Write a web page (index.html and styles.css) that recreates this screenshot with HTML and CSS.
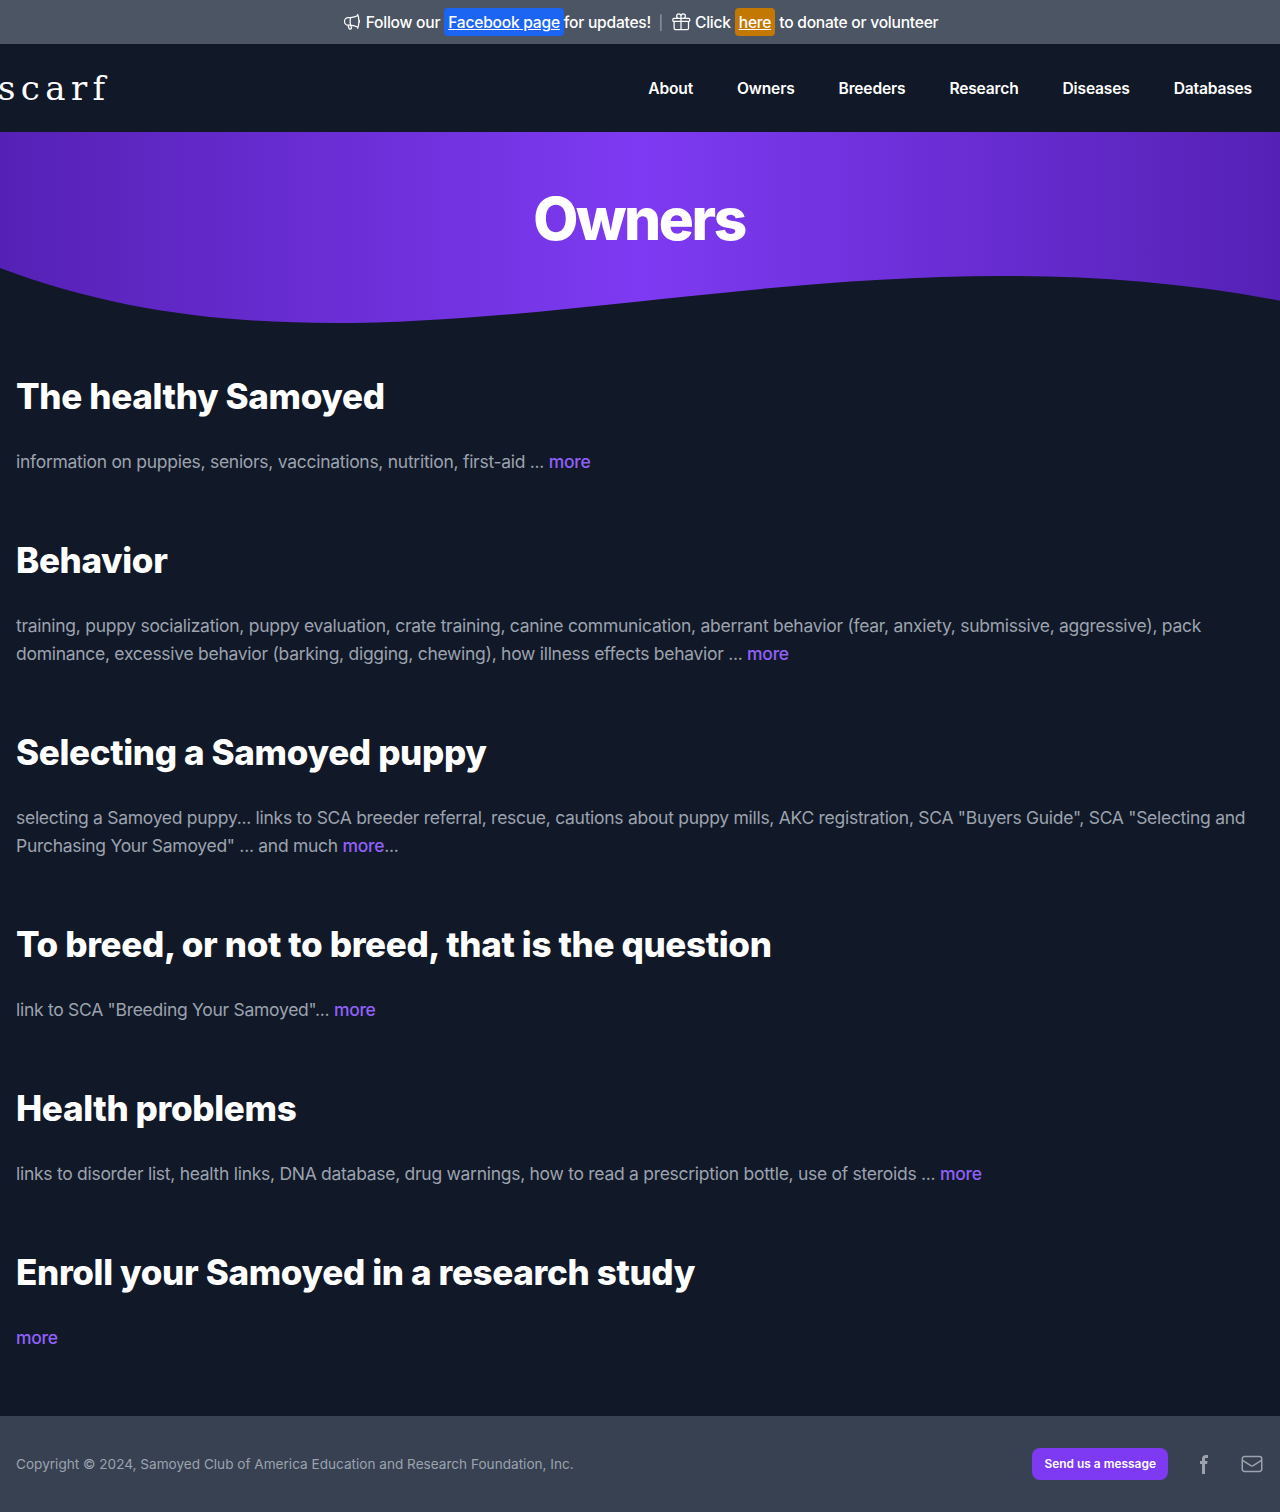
FILE: index.html
```html
<!DOCTYPE html>
<html lang="en">
<head>
<meta charset="utf-8">
<title>Owners - SCARF</title>
<link rel="stylesheet" href="styles.css">
</head>
<body>
<div class="banner">
  <svg class="icon horn" viewBox="0 0 24 24"><path d="M10.34 15.84c-.688-.06-1.386-.09-2.09-.09H7.5a4.5 4.5 0 1 1 0-9h.75c.704 0 1.402-.03 2.09-.09m0 9.18c.253.962.584 1.892.985 2.783.247.55.06 1.21-.463 1.511l-.657.38c-.551.318-1.26.117-1.527-.461a20.845 20.845 0 0 1-1.44-4.282m3.102.069a18.03 18.03 0 0 1-.59-4.59c0-1.586.205-3.124.59-4.59m0 9.18a23.848 23.848 0 0 1 8.835 2.535M10.34 6.66a23.847 23.847 0 0 0 8.835-2.535m0 0A23.74 23.74 0 0 0 18.795 3m.38 1.125a23.91 23.91 0 0 1 1.014 5.395m-1.014 8.855c-.118.38-.245.754-.38 1.125m.38-1.125a23.91 23.91 0 0 0 1.014-5.395m0-3.46c.495.413.811 1.035.811 1.73 0 .695-.316 1.317-.811 1.73m0-3.46a24.347 24.347 0 0 1 0 3.46"/></svg>
  <span class="follow">Follow our</span><a class="pill blue" href="#">Facebook page</a><span>for updates!</span><span class="bar">|</span>
  <svg class="icon gift" viewBox="0 0 24 24"><path d="M21 11.25v8.25a1.5 1.5 0 0 1-1.5 1.5H5.25a1.5 1.5 0 0 1-1.5-1.5v-8.25M12 4.875A2.625 2.625 0 1 0 9.375 7.5H12m0-2.625V7.5m0-2.625A2.625 2.625 0 1 1 14.625 7.5H12m0 0V21m-8.625-9.75h18c.621 0 1.125-.504 1.125-1.125v-1.5c0-.621-.504-1.125-1.125-1.125h-18c-.621 0-1.125.504-1.125 1.125v1.5c0 .621.504 1.125 1.125 1.125Z"/></svg>
  <span class="click">Click</span><a class="pill amber" href="#">here</a><span class="donate">to donate or volunteer</span>
</div>
<header class="header">
  <a class="logo" href="#">scarf</a>
  <nav class="nav"><a href="#">About</a><a href="#">Owners</a><a href="#">Breeders</a><a href="#">Research</a><a href="#">Diseases</a><a href="#">Databases</a></nav>
</header>
<section class="hero">
  <h1>Owners</h1>
  <svg class="wave" viewBox="0 0 1280 80" preserveAspectRatio="none"><path d="M0 16C390 164 794 -44 1280 48.7V80H0Z"/></svg>
</section>
<main class="main">
  <section><h2>The healthy Samoyed</h2><p>information on puppies, seniors, vaccinations, nutrition, first-aid ... <a href="#">more</a></p></section>
  <section><h2>Behavior</h2><p>training, puppy socialization, puppy evaluation, crate training, canine communication, aberrant behavior (fear, anxiety, submissive, aggressive), pack dominance, excessive behavior (barking, digging, chewing), how illness effects behavior ... <a href="#">more</a></p></section>
  <section><h2>Selecting a Samoyed puppy</h2><p>selecting a Samoyed puppy... links to SCA breeder referral, rescue, cautions about puppy mills, AKC registration, SCA "Buyers Guide", SCA "Selecting and Purchasing Your Samoyed" ... and much <a href="#">more</a>...</p></section>
  <section><h2>To breed, or not to breed, that is the question</h2><p>link to SCA "Breeding Your Samoyed"... <a href="#">more</a></p></section>
  <section><h2>Health problems</h2><p>links to disorder list, health links, DNA database, drug warnings, how to read a prescription bottle, use of steroids ... <a href="#">more</a></p></section>
  <section><h2>Enroll your Samoyed in a research study</h2><p><a href="#">more</a></p></section>
</main>
<footer class="footer">
  <p>Copyright © 2024, Samoyed Club of America Education and Research Foundation, Inc.</p>
  <div class="contact">
    <a class="button" href="#">Send us a message</a>
    <svg class="fb" viewBox="0 0 8 19"><path fill-rule="evenodd" d="M6.135 3H8V0H6.135a4.147 4.147 0 0 0-4.142 4.142V6H0v3h2v9.938h3V9h2.021l.592-3H5V3.591A.6.6 0 0 1 5.592 3h.543Z"/></svg>
    <svg class="mail" viewBox="0 0 24 24"><path d="M21.75 6.75v10.5a2.25 2.25 0 0 1-2.25 2.25h-15a2.25 2.25 0 0 1-2.25-2.25V6.75m19.5 0A2.25 2.25 0 0 0 19.5 4.5h-15a2.25 2.25 0 0 0-2.25 2.25m19.5 0v.243a2.25 2.25 0 0 1-1.07 1.916l-7.5 4.615a2.25 2.25 0 0 1-2.36 0L3.32 8.91a2.25 2.25 0 0 1-1.07-1.916V6.75"/></svg>
  </div>
</footer>
</body>
</html>
```
FILE: styles.css
```css
* { box-sizing: border-box; margin: 0; padding: 0; }
body { background: #111827; color: #fff; font-family: Inter, sans-serif; font-size: 15.6px; line-height: 25px; }
a { color: inherit; text-decoration: none; }
svg { display: block; flex: none; fill: none; stroke: currentColor; stroke-width: 1.5; stroke-linecap: round; stroke-linejoin: round; }
.banner { height: 44px; background: #4b5563; display: flex; align-items: center; justify-content: center; font-weight: 500; letter-spacing: -0.24px; white-space: nowrap; }
.icon { width: 20px; height: 20px; }
.follow, .click { margin: 0 4px; }
.pill { height: 28px; padding: 1.5px 4px; border-radius: 4px; text-decoration: underline; }
.blue { background: #1c64f2; }
.amber { background: #c27803; }
.bar { margin: 0 8px 0 7.5px; color: #9ca3af; font-size: 14px; font-weight: 400; }
.donate { margin-left: 4px; }
.header { height: 88px; padding-right: 28px; display: flex; align-items: center; justify-content: space-between; }
.logo { font-family: "DejaVu Serif", serif; font-size: 34px; line-height: 40px; letter-spacing: 5.4px; margin-left: -2px; }
.nav { display: flex; gap: 44px; font-weight: 600; letter-spacing: -0.18px; }
.hero { height: 200px; padding-top: 57px; background: linear-gradient(90deg, #5521b5, #7e3af2 50%, #5521b5); text-align: center; display: flex; flex-direction: column; justify-content: space-between; }
.hero h1 { font-size: 58.5px; line-height: 60px; font-weight: 800; letter-spacing: -2.4px; margin-left: -2px; }
.wave { width: 100%; height: 80px; fill: #111827; stroke: none; }
.main { padding: 40px 16px 64px; display: flex; flex-direction: column; gap: 60px; }
.main h2 { font-size: 35px; line-height: 48px; font-weight: 800; letter-spacing: -0.34px; margin-bottom: 28px; }
.main p { font-size: 17.5px; line-height: 28px; color: #9ca3af; letter-spacing: -0.28px; }
.main p a { color: #9061f9; font-weight: 500; }
.footer { height: 96px; padding: 0 16px; background: #374151; color: #9ca3af; display: flex; align-items: center; justify-content: space-between; }
.footer p { font-size: 13.6px; line-height: 20px; }
.contact { display: flex; align-items: center; }
.button { height: 32px; padding: 8px 12px; border-radius: 8px; background: #7e3af2; color: #fff; font-size: 11.95px; line-height: 16px; font-weight: 600; }
.fb { width: 8px; height: 19px; margin: 0 32px; fill: currentColor; stroke: none; }
.mail { width: 24px; height: 24px; }
```
